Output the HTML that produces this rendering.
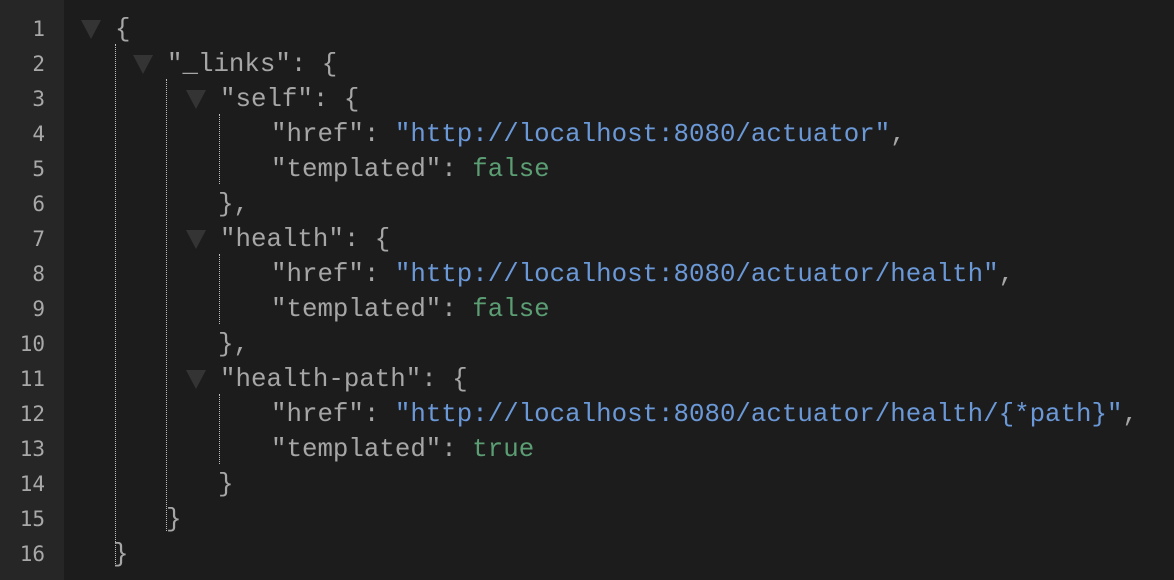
<!DOCTYPE html>
<html><head><style>
html,body{margin:0;padding:0;}
body{width:1174px;height:580px;background:#1c1c1c;position:relative;overflow:hidden;font-family:"Liberation Mono",monospace;font-size:25.8px;}
.g{position:absolute;left:0;top:0;width:64px;height:580px;background:#262626;}
.n{position:absolute;left:0;width:45px;text-align:right;color:#a8a8a8;font-family:"DejaVu Sans Mono",monospace;font-size:21px;line-height:35px;}
.l{position:absolute;white-space:pre;line-height:35px;color:#a6a6a6;}
.s{color:#6b99d8}.b{color:#5c9e74}
.t{position:absolute;width:0;height:0;border-left:10px solid transparent;border-right:10px solid transparent;border-top:19px solid #343434;}
.v{position:absolute;width:0;border-left:1px dotted #bdbdbd;}
</style></head><body>
<div class="g"></div>
<div class="n" style="top:12px">1</div>
<div class="n" style="top:47px">2</div>
<div class="n" style="top:82px">3</div>
<div class="n" style="top:117px">4</div>
<div class="n" style="top:152px">5</div>
<div class="n" style="top:187px">6</div>
<div class="n" style="top:222px">7</div>
<div class="n" style="top:257px">8</div>
<div class="n" style="top:292px">9</div>
<div class="n" style="top:327px">10</div>
<div class="n" style="top:362px">11</div>
<div class="n" style="top:397px">12</div>
<div class="n" style="top:432px">13</div>
<div class="n" style="top:467px">14</div>
<div class="n" style="top:502px">15</div>
<div class="n" style="top:537px">16</div>

<div class="t" style="left:81px;top:20px"></div>
<div class="t" style="left:133px;top:55px"></div>
<div class="t" style="left:186px;top:90px"></div>
<div class="t" style="left:186px;top:230px"></div>
<div class="t" style="left:186px;top:370px"></div>

<div class="v" style="left:115px;top:44px;height:522px"></div>
<div class="v" style="left:166px;top:79px;height:452px"></div>
<div class="v" style="left:219px;top:114px;height:70px"></div>
<div class="v" style="left:219px;top:254px;height:70px"></div>
<div class="v" style="left:219px;top:394px;height:70px"></div>

<div class="l" style="left:115px;top:12px">{</div>
<div class="l" style="left:167px;top:47px">"_links": {</div>
<div class="l" style="left:220px;top:82px">"self": {</div>
<div class="l" style="left:271px;top:117px">"href": <span class="s">"http://localhost:8080/actuator"</span>,</div>
<div class="l" style="left:271px;top:152px">"templated": <span class="b">false</span></div>
<div class="l" style="left:218px;top:187px">},</div>
<div class="l" style="left:220px;top:222px">"health": {</div>
<div class="l" style="left:271px;top:257px">"href": <span class="s">"http://localhost:8080/actuator/health"</span>,</div>
<div class="l" style="left:271px;top:292px">"templated": <span class="b">false</span></div>
<div class="l" style="left:218px;top:327px">},</div>
<div class="l" style="left:220px;top:362px">"health-path": {</div>
<div class="l" style="left:271px;top:397px">"href": <span class="s">"http://localhost:8080/actuator/health/{*path}"</span>,</div>
<div class="l" style="left:271px;top:432px">"templated": <span class="b">true</span></div>
<div class="l" style="left:218px;top:467px">}</div>
<div class="l" style="left:166px;top:502px">}</div>
<div class="l" style="left:113px;top:537px">}</div>
</body></html>
